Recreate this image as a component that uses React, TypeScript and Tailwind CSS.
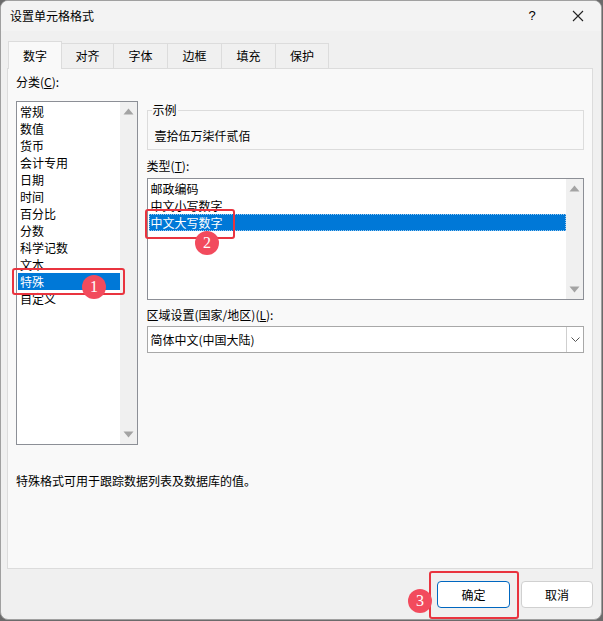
import React from 'react'

const font = { fontFamily: '"Noto Sans CJK SC", "Microsoft YaHei", sans-serif' }

function Arrow({ down }: { down?: boolean }) {
  return (
    <svg width="11" height="7" viewBox="0 0 11 7" className="block">
      {down ? <path d="M0.5 0.5 H10.5 L5.5 6.5 Z" fill="#a3a3a3" /> : <path d="M0.5 6.5 H10.5 L5.5 0.5 Z" fill="#a3a3a3" />}
    </svg>
  )
}

function Scrollbar() {
  return (
    <div className="w-[17px] bg-[#f0f0f0] flex flex-col items-center justify-between py-[6px]">
      <Arrow />
      <Arrow down />
    </div>
  )
}

function Badge({ n, x, y }: { n: string; x: number; y: number }) {
  return (
    <div
      className="absolute w-[24px] h-[24px] rounded-full bg-[#f24b5d] text-white flex items-center justify-center text-[16px] leading-none"
      style={{ left: x - 12, top: y - 12, fontFamily: '"Liberation Serif", serif' }}
    >
      {n}
    </div>
  )
}

function Box({ x, y, w, h }: { x: number; y: number; w: number; h: number }) {
  return <div className="absolute border-2 border-[#e9343f] rounded-[3px]" style={{ left: x, top: y, width: w, height: h }} />
}

const categories = ['常规', '数值', '货币', '会计专用', '日期', '时间', '百分比', '分数', '科学记数', '文本', '特殊', '自定义']
const tabs = ['数字', '对齐', '字体', '边框', '填充', '保护']
const tabW = [54, 52, 54, 54, 54, 53]

export default function App() {
  return (
    <div className="relative w-[603px] h-[621px] bg-[#6b6b6b] text-[12px] text-black" style={font}>
      <div className="w-[602px] h-[620px] bg-[#f0f0f0] border border-[#a0a0a0] rounded-lg overflow-hidden flex flex-col">
        {/* Title bar */}
        <div className="h-[30px] bg-[#f3f3f3] flex items-center justify-between pl-[9px]">
          <span className="text-[12px]">设置单元格格式</span>
          <div className="flex items-center h-full">
            <span className="w-[46px] text-center text-[13px]" style={{ fontFamily: '"Liberation Sans", sans-serif' }}>?</span>
            <span className="w-[46px] flex justify-center">
              <svg width="12" height="12" viewBox="0 0 12 12">
                <path d="M1 1 L11 11 M11 1 L1 11" stroke="#222" strokeWidth="1.1" />
              </svg>
            </span>
          </div>
        </div>

        {/* Tabs */}
        <div className="flex items-end h-[37px] pl-[7px]">
          {tabs.map((t, i) =>
            i === 0 ? (
              <div key={t} className="h-[28px] bg-[#f9f9f9] border border-b-0 border-[#dcdcdc] flex items-center justify-center -mb-px relative z-10" style={{ width: tabW[i] }}>
                {t}
              </div>
            ) : (
              <div key={t} className="h-[25px] bg-[#f0f0f0] border border-l-0 border-b-0 border-[#dcdcdc] flex items-center justify-center" style={{ width: tabW[i] }}>
                {t}
              </div>
            )
          )}
        </div>

        {/* Panel */}
        <div className="ml-[6px] w-[586px] h-[501px] bg-[#f9f9f9] border border-[#dcdcdc] flex flex-col px-[8px]">
          <div className="flex gap-[9px]">
            {/* Left */}
            <div className="w-[122px] flex flex-col">
              <div className="h-[16px] mt-[5px] leading-[16px]">
                分类(<span className="underline">C</span>):
              </div>
              <div className="mt-[11px] h-[344px] bg-white border border-[#8c8f96] flex">
                <div className="flex-1 pt-[1px] pl-px">
                  {categories.map((c) => (
                    <div key={c} className={`h-[17px] leading-[17px] px-[2px] ${c === '特殊' ? 'bg-[#0078d7] text-white' : ''}`}>
                      {c}
                    </div>
                  ))}
                </div>
                <Scrollbar />
              </div>
            </div>

            {/* Right */}
            <div className="w-[439px] flex flex-col">
              <div className="mt-[41px] h-[40px] border border-[#dcdcdc] relative">
                <span className="absolute -top-[9px] left-[4px] bg-[#f9f9f9] px-px leading-[16px]">示例</span>
                <div className="pt-[17px] pl-[7px] leading-[16px]">壹拾伍万柒仟贰佰</div>
              </div>
              <div className="mt-[8px] h-[16px] leading-[16px]">
                类型(<span className="underline">T</span>):
              </div>
              <div className="mt-[4px] h-[122px] bg-white border border-[#8c8f96] flex">
                <div className="flex-1 pt-[1px] pl-px">
                  <div className="h-[17px] leading-[17px] px-[2px]">邮政编码</div>
                  <div className="h-[17px] leading-[17px] px-[2px]">中文小写数字</div>
                  <div className="h-[17px] leading-[17px] px-[2px] bg-[#0078d7] text-white outline outline-1 outline-dotted outline-[#99c9ef] -outline-offset-1">中文大写数字</div>
                </div>
                <Scrollbar />
              </div>
              <div className="mt-[7px] h-[16px] leading-[16px]">
                区域设置(国家/地区)(<span className="underline">L</span>):
              </div>
              <div className="mt-[3px] h-[27px] bg-white border border-[#a8a8a8] flex items-center">
                <span className="flex-1 pl-[3px]">简体中文(中国大陆)</span>
                <div className="w-[17px] h-full border-l border-[#cfcfcf] flex items-center justify-center">
                  <svg width="9" height="6" viewBox="0 0 9 6">
                    <path d="M0.5 0.5 L4.5 4.5 L8.5 0.5" stroke="#555" fill="none" strokeWidth="1" />
                  </svg>
                </div>
              </div>
            </div>
          </div>

          <div className="mt-[28px] leading-[16px]">特殊格式可用于跟踪数据列表及数据库的值。</div>
        </div>

        {/* Buttons */}
        <div className="flex justify-end gap-[11px] pr-[8px] mt-[12px]">
          <button className="w-[73px] h-[27px] bg-white border border-[#0067c0] rounded-[4px] text-[12px]">确定</button>
          <button className="w-[72px] h-[27px] bg-white border border-[#d0d0d0] rounded-[4px] text-[12px]">取消</button>
        </div>
      </div>

      {/* Annotations */}
      <Box x={12} y={268} w={113} h={27} />
      <Badge n="1" x={94} y={287} />
      <Box x={145} y={209} w={90} h={30} />
      <Badge n="2" x={207} y={243} />
      <Box x={429} y={571} w={90} h={48} />
      <Badge n="3" x={420} y={601} />
    </div>
  )
}
